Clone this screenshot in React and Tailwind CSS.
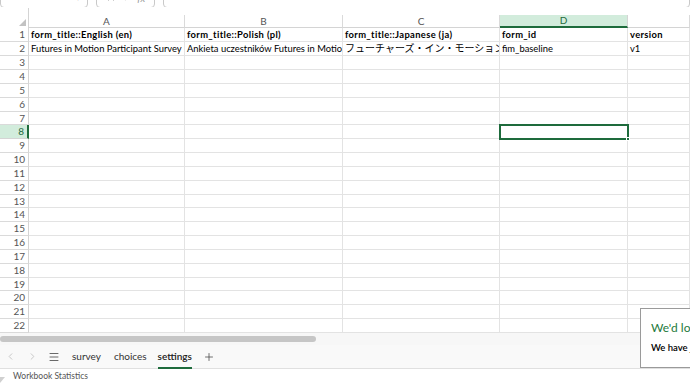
import { ChevronLeft, ChevronRight, Menu, Plus, X, Check } from 'lucide-react';

const COLS = [
  { key: 'A', w: 'w-[156px]' },
  { key: 'B', w: 'w-[158px]' },
  { key: 'C', w: 'w-[157px]' },
  { key: 'D', w: 'w-[128px]' },
  { key: 'E', w: 'flex-1' },
];

const DATA = {
  1: ['form_title::English (en)', 'form_title::Polish (pl)', 'form_title::Japanese (ja)', 'form_id', 'version'],
  2: [
    'Futures in Motion Participant Survey',
    'Ankieta uczestników Futures in Motion Participant Survey',
    'フューチャーズ・イン・モーション参加者アンケート',
    'fim_baseline',
    'v1',
  ],
};

const ROWS = Array.from({ length: 22 }, (_, i) => i + 1);

function FormulaBar() {
  return (
    <div className="h-[9px] overflow-hidden">
      <div className="flex items-start gap-2 -mt-[12px] h-[20px]">
        <div className="w-[88px] h-[20px] shrink-0 border border-[#c9c9c9] rounded-[4px] flex items-end justify-between pl-[8px] pr-[5px] pb-[3px] text-[11px] text-[#222]">
          <span>D8</span>
          <span className="text-[8px] text-[#444] mb-[1px]">▼</span>
        </div>
        <div className="w-[59px] h-[20px] shrink-0 border border-[#c9c9c9] rounded-[4px] flex items-end justify-around px-[6px] pb-[4px] text-[#9a9a9a]">
          <X size={10} strokeWidth={1.5} />
          <Check size={10} strokeWidth={1.5} />
          <span className="text-[10px] italic leading-none">fx</span>
        </div>
        <div className="flex-1 h-[20px] border border-[#c9c9c9] rounded-[4px]" />
      </div>
    </div>
  );
}

function HeaderRow() {
  return (
    <div className="flex h-[21px]">
      <div className="w-[29px] shrink-0 border-r border-[#d4d4d4] mt-[1px] flex items-end justify-end pr-[2px] pb-[2px]">
        <div className="w-0 h-0 border-l-[7px] border-l-transparent border-b-[7px] border-b-[#c2c2c2]" />
      </div>
      {COLS.map((c) => (
        <div
          key={c.key}
          className={`${c.w} shrink-0 mt-[8px] h-[13px] flex items-center justify-center text-[10px] ${
            c.key === 'D'
              ? 'bg-[#d2ecdc] text-[#1e6b3c] border-b-2 border-[#1e6b3c] border-r border-r-[#d4d4d4]'
              : 'text-[#555] border-r border-[#dadada] border-b border-b-[#d4d4d4]'
          }`}
        >
          {c.key === 'E' ? '' : c.key}
        </div>
      ))}
    </div>
  );
}

function Row({ n }) {
  const vals = DATA[n] || [];
  const sel = n === 8;
  return (
    <div className="flex h-[13.85px] leading-[13px]">
      <div
        className={`w-[29px] shrink-0 text-right pr-[3px] text-[10px] border-b ${
          sel
            ? 'bg-[#d2ecdc] text-[#1e6b3c] border-r-2 border-r-[#1e6b3c] border-b-[#d4d4d4]'
            : 'text-[#555] border-r border-r-[#d4d4d4] border-b-[#dadada]'
        }`}
      >
        {n}
      </div>
      {COLS.map((c, i) => (
        <div
          key={c.key}
          className={`${c.w} shrink-0 border-r border-b border-[#e3e3e3] pl-[2px] whitespace-nowrap text-black ${
            n === 2 && c.key === 'C' ? 'text-[10px]' : 'text-[9.4px]'
          } ${n === 1 ? 'font-bold tracking-[0.35px]' : ''} ${
            sel && c.key === 'D' ? 'relative' : 'overflow-hidden'
          }`}
        >
          {vals[i]}
          {sel && c.key === 'D' && (
            <div className="absolute -left-[1px] -top-[1px] w-[130px] h-[16px] border-2 border-[#1e6b3c]">
              <div className="absolute -right-[3px] -bottom-[3px] w-[4px] h-[4px] bg-[#1e6b3c] border border-white" />
            </div>
          )}
        </div>
      ))}
    </div>
  );
}

export default function App() {
  return (
    <div
      className="w-[690px] h-[383px] overflow-hidden bg-white relative flex flex-col"
      style={{ fontFamily: 'Lato, "Noto Sans CJK JP", sans-serif' }}
    >
      <FormulaBar />
      <HeaderRow />
      <div className="flex flex-col">
        {ROWS.map((n) => (
          <Row key={n} n={n} />
        ))}
      </div>
      <div className="h-[12px] shrink-0 flex items-center bg-[#f7f7f7]">
        <div className="w-[316px] h-[6px] rounded-full bg-[#c6c6c6]" />
      </div>
      <div className="h-[23px] shrink-0 bg-[#f9f9f9] flex items-center text-[10px] text-[#333]">
        <ChevronLeft size={11} className="ml-[5px] text-[#c4c4c4]" />
        <ChevronRight size={11} className="ml-[11px] text-[#c4c4c4]" />
        <Menu size={12} className="ml-[10px] text-[#444]" strokeWidth={1.6} />
        <span className="ml-[12px]">survey</span>
        <span className="ml-[13px]">choices</span>
        <span className="ml-[11px] relative font-semibold text-[#222]">
          settings
          <span className="absolute left-0 right-0 -bottom-[5px] h-[2px] bg-[#1e6b3c]" />
        </span>
        <Plus size={12} className="ml-[11px] text-[#444]" strokeWidth={1.5} />
      </div>
      <div className="flex-1 border-t border-[#e0e0e0] bg-white flex items-center text-[8.5px] text-[#555]">
        <div className="w-0 h-0 border-r-[5px] border-r-transparent border-t-[6px] border-t-[#d0d0d0] mt-[8px]" />
        <span className="ml-[8px]">Workbook Statistics</span>
      </div>
      <div className="absolute left-[640px] top-[308px] w-[60px] h-[60px] bg-white border border-[#9a9a9a] pl-[10px] pt-[10px]">
        <div className="text-[12px] text-[#1e7a3c] whitespace-nowrap">We'd love your feedback</div>
        <div className="mt-[4px] text-[9.5px] font-semibold text-black whitespace-nowrap">We have just a moment</div>
      </div>
    </div>
  );
}
